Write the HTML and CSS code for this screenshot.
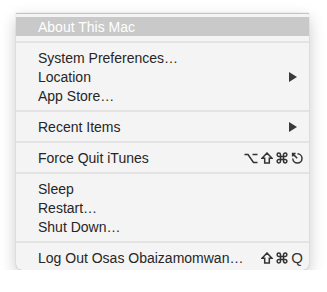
FILE: index.html
```html
<!DOCTYPE html>
<html lang="en">
<head>
    <meta charset="UTF-8">
    <meta name="viewport" content="width=device-width, initial-scale=1.0">
    <title>Apple Menu</title>
    <link rel="stylesheet" href="styles.css">
</head>
<body>
    <div class="menu">
        <div class="item active">About This Mac</div>
        <div class="sep"></div>
        <div class="item">System Preferences…</div>
        <div class="item">Location <span class="arrow"></span></div>
        <div class="item">App Store…</div>
        <div class="sep"></div>
        <div class="item">Recent Items <span class="arrow"></span></div>
        <div class="sep"></div>
        <div class="item">Force Quit iTunes
            <span class="keys">
                <!-- option -->
                <svg class="key wide" viewBox="0 0 14 12"><path d="M0.5 2.5 H4 L9.5 10.5 H13.5 M8.5 2.5 H13.5"/></svg>
                <!-- shift -->
                <svg class="key" viewBox="0 0 12 12"><path d="M6 1 L11 6.2 H8.3 V11 H3.7 V6.2 H1 Z"/></svg>
                <!-- command -->
                <svg class="key" viewBox="0 0 12 12"><path d="M4.5 9.2 V2.8 A1.7 1.7 0 1 0 2.8 4.5 H9.2 A1.7 1.7 0 1 0 7.5 2.8 V9.2 A1.7 1.7 0 1 0 9.2 7.5 H2.8 A1.7 1.7 0 1 0 4.5 9.2 Z"/></svg>
                <!-- escape -->
                <svg class="key" viewBox="0 0 12 12"><path d="M6.5 1.8 A4.6 4.6 0 1 1 1.8 6.5 M6.2 6.2 L1.6 1.6 M1.6 4.6 V1.6 H4.6"/></svg>
            </span>
        </div>
        <div class="sep"></div>
        <div class="item">Sleep</div>
        <div class="item">Restart…</div>
        <div class="item">Shut Down…</div>
        <div class="sep"></div>
        <div class="item">Log Out Osas Obaizamomwan…
            <span class="keys">
                <svg class="key" viewBox="0 0 12 12"><path d="M6 1 L11 6.2 H8.3 V11 H3.7 V6.2 H1 Z"/></svg>
                <svg class="key" viewBox="0 0 12 12"><path d="M4.5 9.2 V2.8 A1.7 1.7 0 1 0 2.8 4.5 H9.2 A1.7 1.7 0 1 0 7.5 2.8 V9.2 A1.7 1.7 0 1 0 9.2 7.5 H2.8 A1.7 1.7 0 1 0 4.5 9.2 Z"/></svg>
                <span class="letter">Q</span>
            </span>
        </div>
    </div>
</body>
</html>
```

FILE: styles.css
```css
body {
    margin: 0;
    padding: 13px 18px 0 16px;
    background: #fff;
    font-family: "Liberation Sans", Arial, sans-serif;
}
.menu {
    width: 293px;
    padding: 3px 0 3px;
    background: #f4f4f4;
    border-top: 1px solid #c4c4c4;
    border-radius: 0 0 6px 6px;
    box-shadow: 0 6px 16px rgba(0,0,0,0.22), 0 0 1px rgba(0,0,0,0.35);
    box-sizing: border-box;
}
.item {
    display: flex;
    align-items: center;
    justify-content: space-between;
    height: 19px;
    padding: 0 6px 0 22px;
    font-size: 14px;
    color: #262626;
}
.item.active {
    background: #c9c9c9;
    color: #fff;
}
.sep {
    height: 2px;
    margin: 5px 0;
    background: #e3e3e3;
}
.arrow {
    width: 0;
    height: 0;
    margin-right: 6px;
    border-top: 5px solid transparent;
    border-bottom: 5px solid transparent;
    border-left: 8px solid #3a3a3a;
}
.keys {
    display: flex;
    align-items: center;
    gap: 3px;
}
.key {
    width: 12px;
    height: 12px;
    fill: none;
    stroke: #333;
    stroke-width: 1.5;
}
.key.wide {
    width: 14px;
}
.letter {
    font-size: 15px;
    color: #333;
}
```
